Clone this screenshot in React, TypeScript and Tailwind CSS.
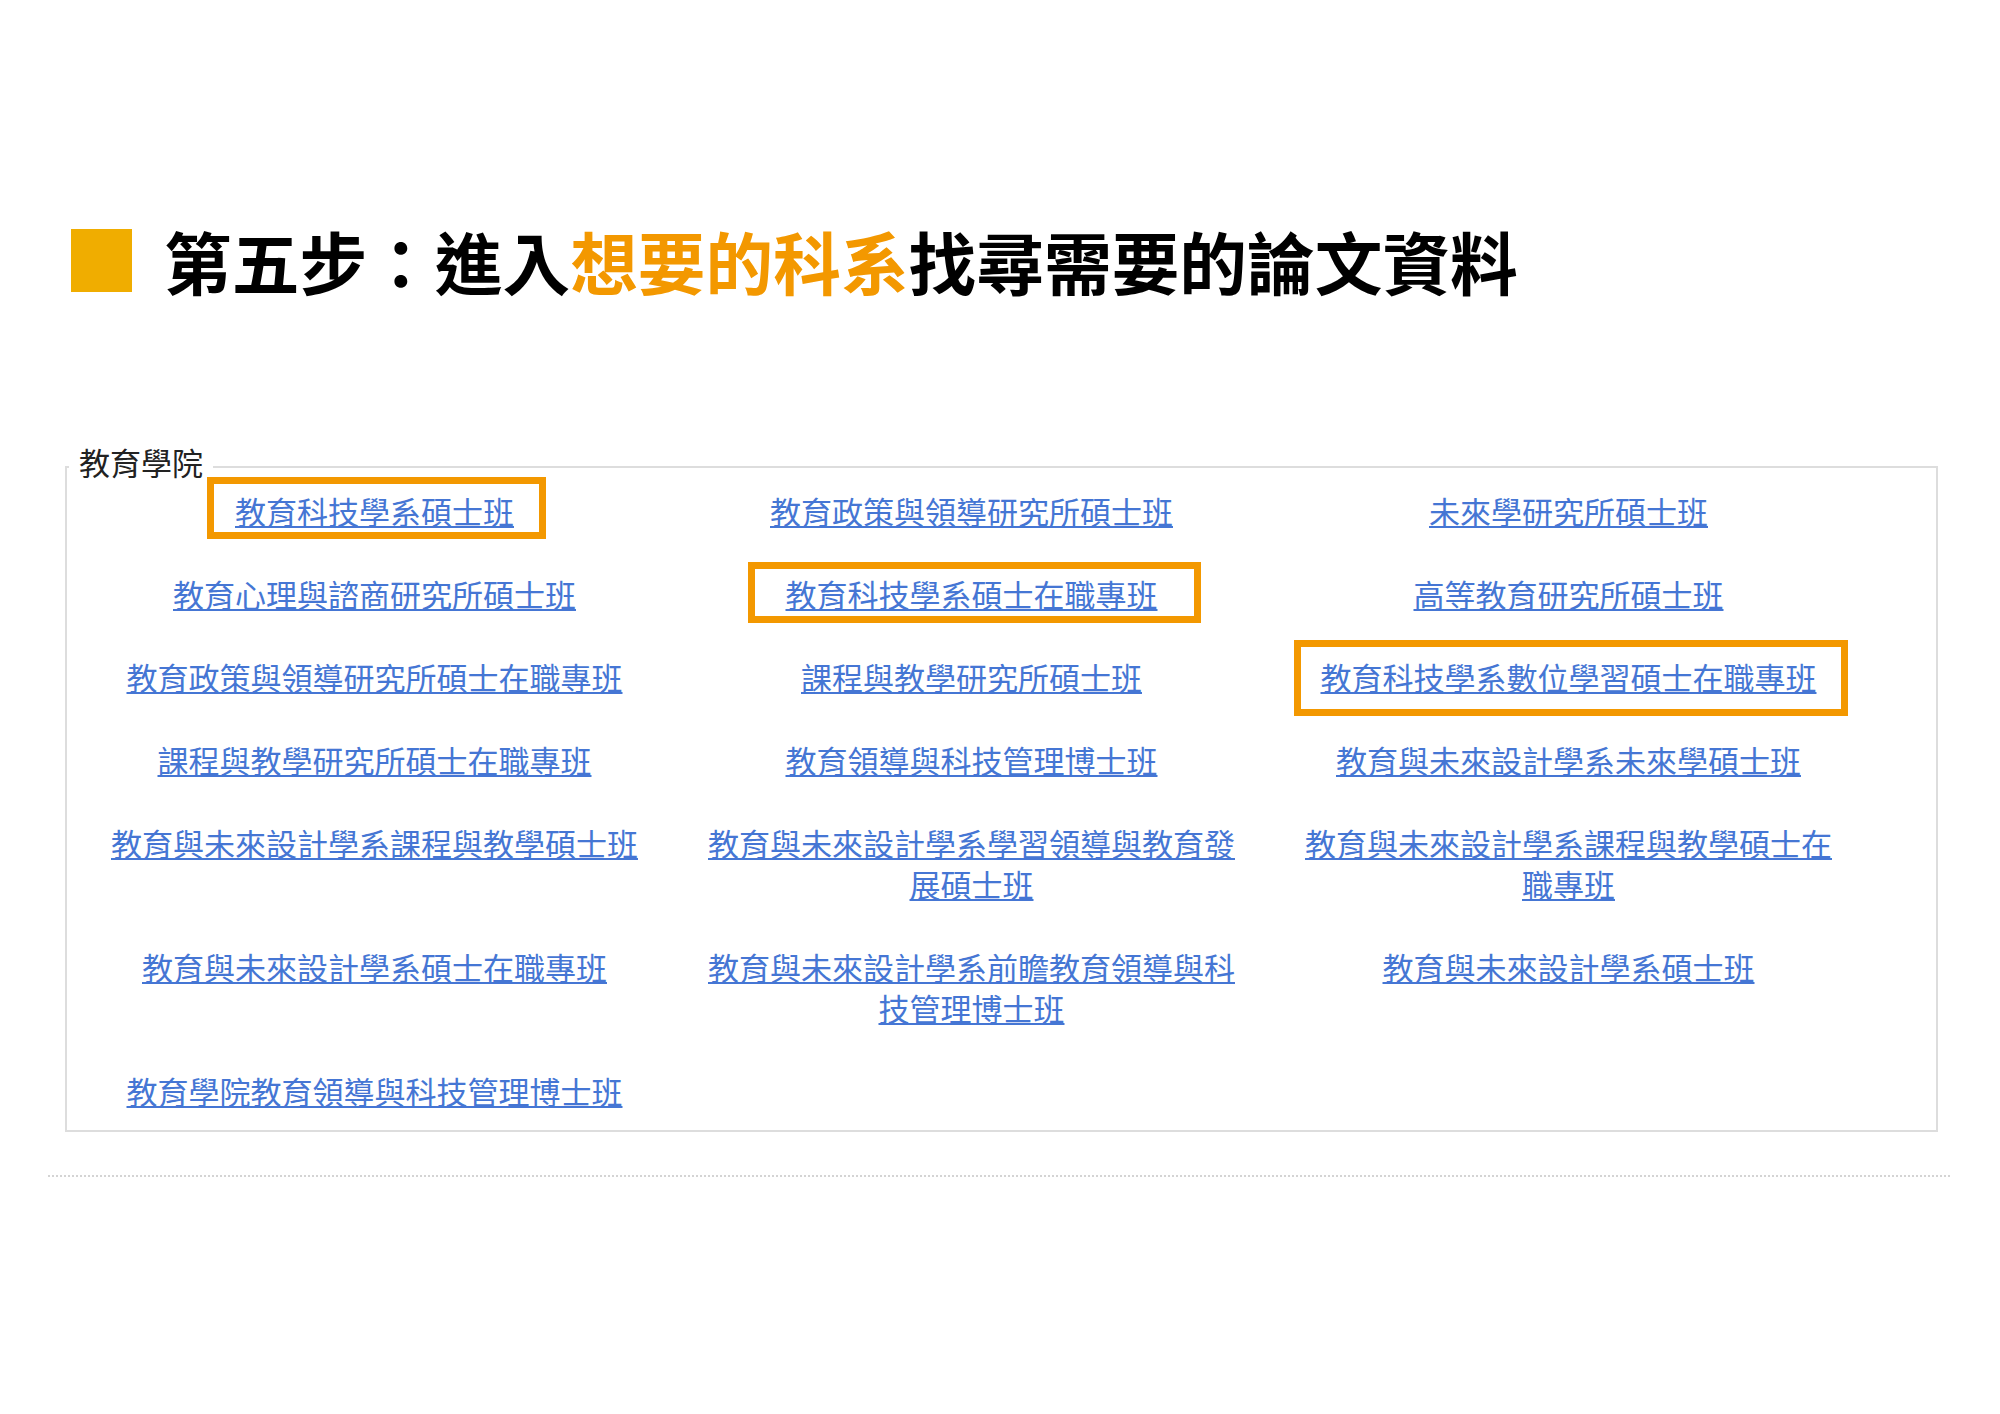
import React from "react";

type Course = {
  name: string;
  // orange annotation frame around the link, offsets in px
  mark?: { l: string; r: string; t: string; b: string };
};

const courses: Course[] = [
  { name: "教育科技學系碩士班", mark: { l: "-left-[28px]", r: "-right-[32px]", t: "-top-[13px]", b: "-bottom-[8px]" } },
  { name: "教育政策與領導研究所碩士班" },
  { name: "未來學研究所碩士班" },
  { name: "教育心理與諮商研究所碩士班" },
  { name: "教育科技學系碩士在職專班", mark: { l: "-left-[38px]", r: "-right-[43px]", t: "-top-[11px]", b: "-bottom-[9px]" } },
  { name: "高等教育研究所碩士班" },
  { name: "教育政策與領導研究所碩士在職專班" },
  { name: "課程與教學研究所碩士班" },
  { name: "教育科技學系數位學習碩士在職專班", mark: { l: "-left-[27px]", r: "-right-[31px]", t: "-top-[16px]", b: "-bottom-[19px]" } },
  { name: "課程與教學研究所碩士在職專班" },
  { name: "教育領導與科技管理博士班" },
  { name: "教育與未來設計學系未來學碩士班" },
  { name: "教育與未來設計學系課程與教學碩士班" },
  { name: "教育與未來設計學系學習領導與教育發展碩士班" },
  { name: "教育與未來設計學系課程與教學碩士在職專班" },
  { name: "教育與未來設計學系碩士在職專班" },
  { name: "教育與未來設計學系前瞻教育領導與科技管理博士班" },
  { name: "教育與未來設計學系碩士班" },
  { name: "教育學院教育領導與科技管理博士班" },
];

function CourseLink({ course }: { course: Course }) {
  const link = (
    <a href="#" className="text-[#4576d4] underline decoration-[2px] underline-offset-[2px]">
      {course.name}
    </a>
  );
  if (!course.mark) return link;
  const m = course.mark;
  return (
    <span className="relative inline-block">
      {link}
      <span
        className={`pointer-events-none absolute ${m.l} ${m.r} ${m.t} ${m.b} border-[7px] border-[#f39800]`}
      />
    </span>
  );
}

export default function App() {
  return (
    <main className="min-h-[1414px] w-[2000px] bg-white pt-[220px] font-['Noto_Sans_CJK_TC',sans-serif]">
      {/* Step heading */}
      <div className="flex items-center pl-[71px]">
        <div className="h-[63px] w-[61px] shrink-0 bg-[#f0ad00]" />
        <h1 className="ml-[32px] text-[67.7px] font-bold leading-[80px] text-black">
          第五步：進入<span className="text-[#f39800]">想要的科系</span>找尋需要的論文資料
        </h1>
      </div>

      {/* College panel */}
      <section className="ml-[65px] mt-[166px] w-[1873px] border-2 border-[#dddddd] pb-[19px]">
        <div className="-mt-[27px] ml-[2px] w-fit bg-white px-[10px] text-[31px] leading-[41px] text-[#222222]">
          教育學院
        </div>
        <div className="mt-[8px] grid grid-cols-[repeat(3,597px)] gap-y-[42px] pl-[9px] text-[31px] leading-[41px]">
          {courses.map((c) => (
            <div key={c.name} className="px-[28px] text-center">
              <CourseLink course={c} />
            </div>
          ))}
        </div>
      </section>

      <div className="ml-[48px] mt-[43px] w-[1902px] border-t-2 border-dotted border-[#d4d4d4]" />
    </main>
  );
}
